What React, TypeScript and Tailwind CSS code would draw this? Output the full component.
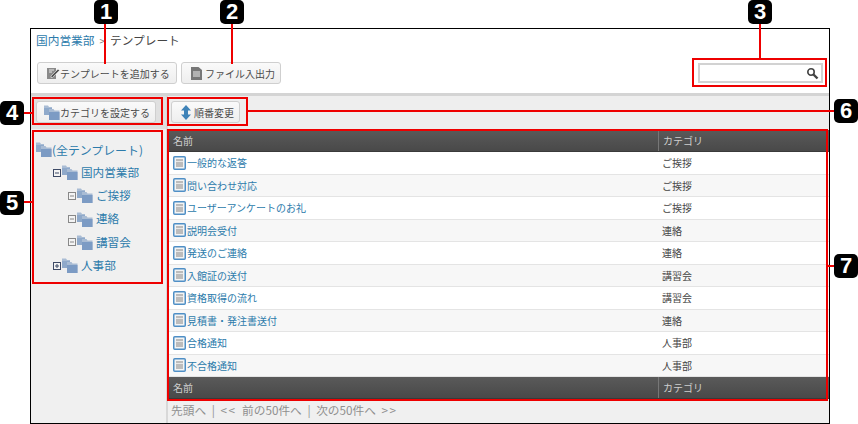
import React from "react";

const font = { fontFamily: '"Noto Sans CJK JP", "Liberation Sans", sans-serif' };

function Badge({ n, className }: { n: number; className: string }) {
  return (
    <div className={"absolute w-[24px] h-[24px] rounded-[5px] bg-black text-white flex items-center justify-center text-[22px] font-bold leading-none " + className} style={{ fontFamily: '"Liberation Sans", sans-serif' }}>
      {n}
    </div>
  );
}

function Line({ className }: { className: string }) {
  return <div className={"absolute bg-[#ee0000] " + className} />;
}

function Box({ className }: { className: string }) {
  return <div className={"absolute border-2 border-[#ee0000] " + className} />;
}

function FolderIcon() {
  return (
    <svg width="16" height="15" viewBox="0 0 16 15" className="shrink-0">
      <path d="M0 0.5h4l1 1.5h3v8H0z" fill="#a9bcd4" />
      <path d="M0 3h8v7H0z" fill="#8fa9ca" />
      <path d="M5 4h4.5l1 1.5H15.5V15H5z" fill="#a9bcd4" />
      <path d="M5 7h10.5v8H5z" fill="#7c9bc4" />
    </svg>
  );
}

function DocIcon() {
  return (
    <svg width="13" height="14" viewBox="0 0 13 14" className="shrink-0">
      <rect x="0.75" y="0.75" width="11.5" height="12.5" rx="1" fill="#f4f4f4" stroke="#4f8fc6" strokeWidth="1.5" />
      <rect x="3" y="3" width="7" height="8" fill="#bcbcbc" />
      <rect x="3" y="5" width="7" height="1" fill="#e8e8e8" />
    </svg>
  );
}

function Toggle({ minus, light }: { minus?: boolean; light?: boolean }) {
  const c = light ? "#888888" : "#3d4a66";
  return (
    <svg width="8" height="8" viewBox="0 0 8 8" className="shrink-0">
      <rect x="0.5" y="0.5" width="7" height="7" fill="#f4f4f4" stroke={c} />
      <path d="M2 4h4" stroke={c} />
      {!minus && <path d="M4 2v4" stroke={c} />}
    </svg>
  );
}

function TreeRow({ label, indent, toggle }: { label: string; indent: string; toggle: React.ReactNode }) {
  return (
    <div className={"flex items-center h-[23.2px] " + indent}>
      {toggle}
      <span className="ml-[1px]"><FolderIcon /></span>
      <span className="ml-[3px] text-[11.6px] text-[#2c7bab]">{label}</span>
    </div>
  );
}

const rows = [
  ["一般的な返答", "ご挨拶"],
  ["問い合わせ対応", "ご挨拶"],
  ["ユーザーアンケートのお礼", "ご挨拶"],
  ["説明会受付", "連絡"],
  ["発送のご連絡", "連絡"],
  ["入館証の送付", "講習会"],
  ["資格取得の流れ", "講習会"],
  ["見積書・発注書送付", "連絡"],
  ["合格通知", "人事部"],
  ["不合格通知", "人事部"],
];

function HeaderRow() {
  return (
    <div className="flex h-[22px] shrink-0 text-[10px] text-[#cfcfcf] bg-gradient-to-b from-[#5a5a5a] to-[#494949] border-b border-[#3a3a3a]">
      <div className="w-[491px] pl-[5px] pb-[1px] flex items-center border-r border-[#777777]">名前</div>
      <div className="flex-1 pl-[4px] pb-[1px] flex items-center">カテゴリ</div>
    </div>
  );
}

function Btn({ children, className = "" }: { children: React.ReactNode; className?: string }) {
  return (
    <div className={"flex items-center h-[22px] rounded-[3px] border border-[#cfcfcf] bg-gradient-to-b from-[#fafafa] to-[#eeeeee] text-[10px] text-[#4a4a4a] " + className}>
      {children}
    </div>
  );
}

export default function App() {
  return (
    <div className="relative w-[858px] h-[424px] bg-white overflow-hidden" style={font}>
      <div className="absolute left-[30px] top-[28px] w-[800px] h-[396px] border border-black flex flex-col bg-white">
        <div className="h-[64px] pl-[5px] shrink-0 flex flex-col">
          <div className="mt-[1px] h-[20px] flex items-center text-[11.7px] text-[#444444]">
            <span className="text-[#2c7bab]">国内営業部</span>
            <span className="ml-[5px] mr-[5px] text-[#777777] text-[10px]">&gt;</span>
            <span>テンプレート</span>
          </div>
          <div className="mt-[12px] flex items-center gap-[4px] pl-[1px]">
            <Btn className="w-[140px] pl-[8px]">
              <svg width="14" height="13" viewBox="0 0 14 13" className="shrink-0">
                <path d="M1 1h9v11H1z" fill="#8a8a8a" />
                <path d="M3 3h5M3 5h3" stroke="#e8e8e8" />
                <path d="M5 9l7-7 1.5 1.5-7 7H5z" fill="#555555" stroke="#f4f4f4" strokeWidth="0.6" />
              </svg>
              <span>テンプレートを追加する</span>
            </Btn>
            <Btn className="w-[100px] pl-[9px]">
              <svg width="11" height="13" viewBox="0 0 11 13" className="shrink-0 mr-[3px]">
                <path d="M0 0h7.5L11 3v10H0z" fill="#777777" />
                <path d="M2 5h7M2 7h7M2 9h7" stroke="#eeeeee" />
              </svg>
              <span>ファイル入出力</span>
            </Btn>
            <div className="ml-auto mr-[6px] w-[125px] h-[20px] border-2 border-[#d2d2d2] bg-white flex items-center justify-end pr-[2px]">
              <svg width="13" height="13" viewBox="0 0 13 13">
                <circle cx="5" cy="5" r="3.2" fill="none" stroke="#444444" strokeWidth="1.6" />
                <path d="M7.5 7.5l4 4" stroke="#444444" strokeWidth="2.4" />
              </svg>
            </div>
          </div>
        </div>
        <div className="h-[3px] shrink-0 bg-[#d4d4d4]" />
        <div className="flex-1 flex min-h-0">
          <div className="w-[135px] shrink-0 bg-[#f0f0f0] flex flex-col">
            <div className="h-[33px] shrink-0 bg-[#e0e0e0] pt-[5px] pl-[5px]">
              <Btn className="w-[120px] pl-[7px]">
                <FolderIcon />
                <span>カテゴリを設定する</span>
              </Btn>
            </div>
            <div className="pt-[9px] pl-[5px] flex flex-col">
              <div className="flex items-center h-[23.2px]">
                <FolderIcon />
                <span className="text-[11.9px] text-[#2c7bab]">(全テンプレート)</span>
              </div>
              <TreeRow label="国内営業部" indent="pl-[17px]" toggle={<Toggle minus />} />
              <TreeRow label="ご挨拶" indent="pl-[32px]" toggle={<Toggle minus light />} />
              <TreeRow label="連絡" indent="pl-[32px]" toggle={<Toggle minus light />} />
              <TreeRow label="講習会" indent="pl-[32px]" toggle={<Toggle minus light />} />
              <TreeRow label="人事部" indent="pl-[17px]" toggle={<Toggle />} />
            </div>
          </div>
          <div className="w-[2px] shrink-0 bg-[#d8d8d8]" />
          <div className="flex-1 flex flex-col min-w-0">
            <div className="h-[34px] shrink-0 bg-[#eeeeee] pt-[5px] pl-[3px]">
              <Btn className="w-[69px] pl-[9px]">
                <svg width="10" height="15" viewBox="0 0 10 15" className="shrink-0 mr-[3px]">
                  <path d="M5 0l5 5.5H7v4h3L5 15 0 9.5h3v-4H0z" fill="#3f83b8" />
                </svg>
                <span>順番変更</span>
              </Btn>
            </div>
            <HeaderRow />
            <div className="flex flex-col shrink-0">
              {rows.map((r, i) => (
                <div key={r[0]} className={"flex h-[22.5px] items-center border-b border-[#e4e4e4] text-[10px] " + (i % 2 === 0 ? "bg-white" : "bg-[#f7f7f7]")}>
                  <div className="w-[491px] pl-[5px] flex items-center gap-[1px] text-[#2c7bab]">
                    <DocIcon />
                    <span>{r[0]}</span>
                  </div>
                  <div className="pl-[3px] text-[#444444]">{r[1]}</div>
                </div>
              ))}
            </div>
            <HeaderRow />
            <div className="flex-1 bg-[#f0f0f0] pl-[3px] pt-[1px] text-[11.7px] text-[#8f8f8f] leading-[20px] whitespace-pre [word-spacing:3px]">
              先頭へ | <span className="tracking-[1.5px]">&lt;&lt;</span> 前の50件へ | 次の50件へ <span className="tracking-[1.5px]">&gt;&gt;</span>
            </div>
          </div>
        </div>
      </div>

      <Box className="left-[32px] top-[97px] w-[131px] h-[28px]" />
      <Box className="left-[32px] top-[130px] w-[131px] h-[154px]" />
      <Box className="left-[167px] top-[97px] w-[81px] h-[29px]" />
      <Box className="left-[167px] top-[129px] w-[661px] h-[272px]" />
      <Box className="left-[692px] top-[58px] w-[135px] h-[29px]" />

      <Line className="left-[104px] top-[20px] w-[2px] h-[44px]" />
      <Line className="left-[231px] top-[20px] w-[2px] h-[44px]" />
      <Line className="left-[759px] top-[20px] w-[2px] h-[40px]" />
      <Line className="left-[22px] top-[112px] w-[10px] h-[2px]" />
      <Line className="left-[22px] top-[201px] w-[10px] h-[2px]" />
      <Line className="left-[248px] top-[110px] w-[590px] h-[2px]" />
      <Line className="left-[827px] top-[265px] w-[10px] h-[2px]" />

      <Badge n={1} className="left-[94px] top-0" />
      <Badge n={2} className="left-[220px] top-0" />
      <Badge n={3} className="left-[748px] top-0" />
      <Badge n={4} className="left-0 top-[101px]" />
      <Badge n={5} className="left-0 top-[191px]" />
      <Badge n={6} className="left-[834px] top-[99px]" />
      <Badge n={7} className="left-[834px] top-[254px]" />
    </div>
  );
}
